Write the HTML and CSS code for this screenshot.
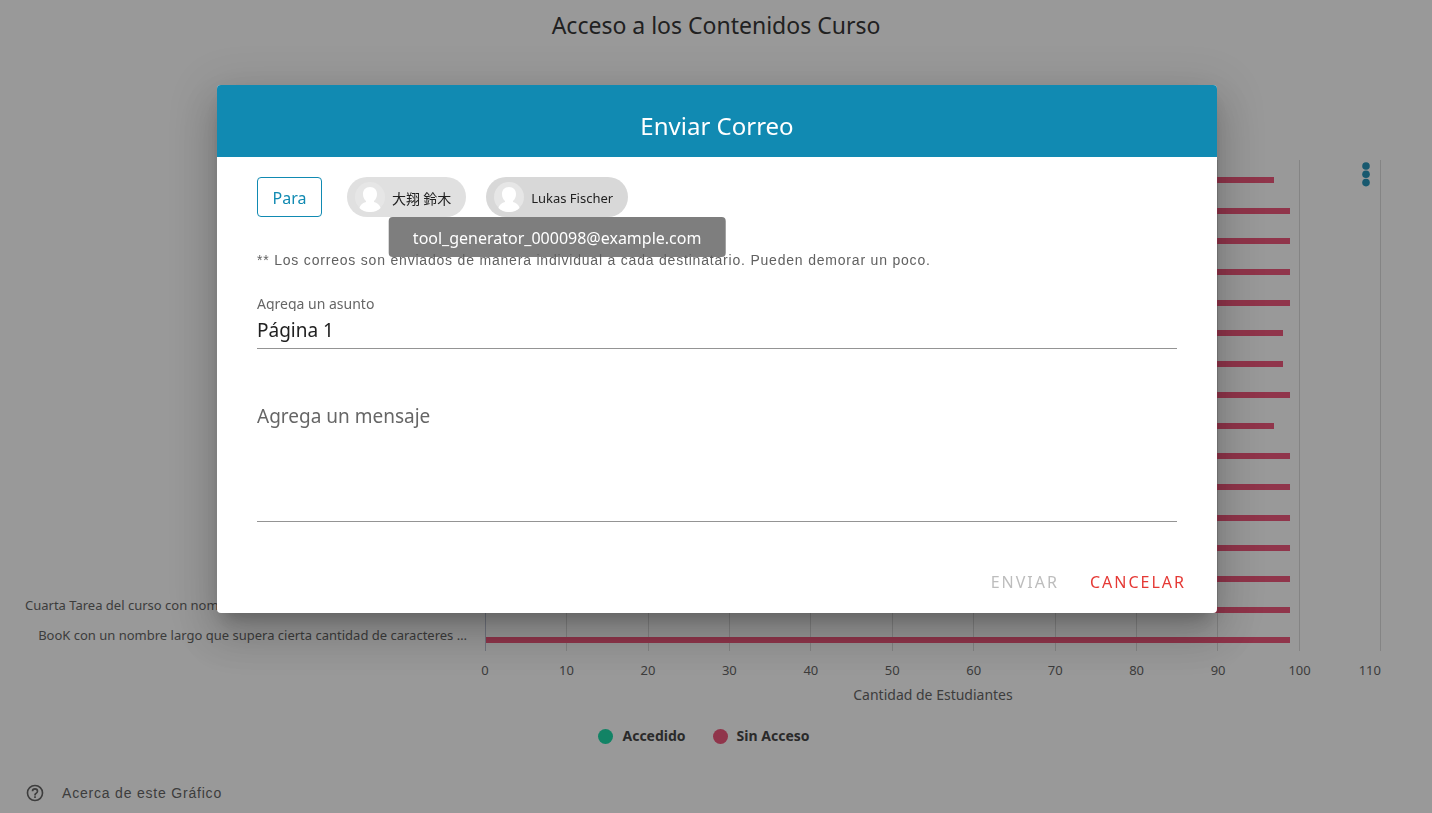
FILE: index.html
```html
<!DOCTYPE html>
<html lang="es">
<head>
<meta charset="utf-8">
<title>Acceso a los Contenidos Curso</title>
<meta name="viewport" content="width=device-width, initial-scale=1">
<link rel="stylesheet" href="styles.css">
</head>
<body>
<main class="page">
  <h1 class="page-title">Acceso a los Contenidos Curso</h1>
  <section class="chart">
    <div class="labels">
      <span></span><span></span><span></span><span></span><span></span><span></span><span></span>
      <span></span><span></span><span></span><span></span><span></span><span></span><span></span>
      <span>Cuarta Tarea del curso con nombre largo que supera cierta cantidad de caracteres</span>
      <span>BooK con un nombre largo que supera cierta cantidad de caracteres …</span>
    </div>
    <div class="plot">
      <div class="grid-lines"><i></i><i></i><i></i><i></i><i></i><i></i><i></i><i></i><i></i><i></i><i></i></div>
      <div class="bars">
        <div class="row"><b style="width:88%"></b></div>
        <div class="row"><b style="width:89.8%"></b></div>
        <div class="row"><b style="width:89.8%"></b></div>
        <div class="row"><b style="width:89.8%"></b></div>
        <div class="row"><b style="width:89.8%"></b></div>
        <div class="row"><b style="width:89%"></b></div>
        <div class="row"><b style="width:89%"></b></div>
        <div class="row"><b style="width:89.8%"></b></div>
        <div class="row"><b style="width:88%"></b></div>
        <div class="row"><b style="width:89.8%"></b></div>
        <div class="row"><b style="width:89.8%"></b></div>
        <div class="row"><b style="width:89.8%"></b></div>
        <div class="row"><b style="width:89.8%"></b></div>
        <div class="row"><b style="width:89.8%"></b></div>
        <div class="row"><b style="width:89.8%"></b></div>
        <div class="row"><b style="width:89.8%"></b></div>
      </div>
      <button class="menu" type="button" aria-label="Menú del gráfico">
        <svg width="8" height="25" viewBox="0 0 8 25"><circle cx="4" cy="4" r="3.800"/><circle cx="4" cy="12.3" r="3.800"/><circle cx="4" cy="20.6" r="3.800"/></svg>
      </button>
    </div>
    <div class="axis"><span>0</span><span>10</span><span>20</span><span>30</span><span>40</span><span>50</span><span>60</span><span>70</span><span>80</span><span>90</span><span>100</span><span>110</span></div>
    <div class="axis-title">Cantidad de Estudiantes</div>
  </section>
  <div class="legend">
    <span class="key key-on">Accedido</span>
    <span class="key key-off">Sin Acceso</span>
  </div>
  <footer class="about">
    <svg width="20" height="20" viewBox="0 0 24 24"><path d="M11,18H13V16H11V18M12,2A10,10 0 0,0 2,12A10,10 0 0,0 12,22A10,10 0 0,0 22,12A10,10 0 0,0 12,2M12,20C7.59,20 4,16.41 4,12C4,7.59 7.59,4 12,4C16.41,4 20,7.59 20,12C20,16.41 16.41,20 12,20M12,6A4,4 0 0,0 8,10H10A2,2 0 0,1 12,8A2,2 0 0,1 14,10C14,12 11,11.75 11,15H13C13,12.75 16,12.5 16,10A4,4 0 0,0 12,6Z"/></svg>
    <span>Acerca de este Gráfico</span>
  </footer>
</main>

<div class="overlay">
  <form class="dialog" role="dialog" aria-labelledby="dialog-title">
    <h2 class="dialog-title" id="dialog-title">Enviar Correo</h2>
    <div class="dialog-body">
      <div class="recipients">
        <button class="to" type="button">Para</button>
        <div class="chip">
          <svg class="avatar" viewBox="0 0 30 30"><circle class="disc" cx="15" cy="15" r="15"/><path d="M15 5c4.500 0 7 3 7 7 0 3-1.200 5.500-3 6.900v1.100c3 .8 5.600 2.400 6.600 6A15 15 0 0 1 15 30 15 15 0 0 1 4.400 26c1-3.600 3.600-5.200 6.600-6v-1.100C9.200 17.500 8 15 8 12c0-4 2.500-7 7-7z"/></svg>
          <span lang="ja">大翔 鈴木</span>
        </div>
        <div class="chip chip-active">
          <svg class="avatar" viewBox="0 0 30 30"><circle class="disc" cx="15" cy="15" r="15"/><path d="M15 5c4.500 0 7 3 7 7 0 3-1.200 5.500-3 6.900v1.100c3 .8 5.600 2.400 6.600 6A15 15 0 0 1 15 30 15 15 0 0 1 4.400 26c1-3.600 3.600-5.200 6.600-6v-1.100C9.200 17.500 8 15 8 12c0-4 2.500-7 7-7z"/></svg>
          <span>Lukas Fischer</span>
          <div class="tooltip" role="tooltip">tool_generator_000098@example.com</div>
        </div>
      </div>
      <p class="note">** Los correos son enviados de manera individual a cada destinatario. Pueden demorar un poco.</p>
      <div class="field">
        <label for="subject">Agrega un asunto</label>
        <input id="subject" type="text" value="Página 1">
      </div>
      <textarea class="message" aria-label="Agrega un mensaje" placeholder="Agrega un mensaje"></textarea>
    </div>
    <div class="actions">
      <button class="send" type="button" disabled>ENVIAR</button>
      <button class="cancel" type="button">CANCELAR</button>
    </div>
  </form>
</div>
</body>
</html>
```
FILE: styles.css
```css
* { box-sizing: border-box; }
body {
  margin: 0;
  background: #fff;
  color: #555;
  font-family: "Noto Sans", "Open Sans", "Noto Sans CJK JP", sans-serif;
}
button, input, textarea { font: inherit; margin: 0; }
button { background: none; border: 0; padding: 0; }

.page { min-height: 100vh; overflow: hidden; }
.page-title {
  margin: 0;
  padding-top: 9px;
  font-size: 23px;
  line-height: 32px;
  font-weight: 400;
  text-align: center;
  color: #222;
}
.chart {
  display: grid;
  grid-template-columns: 485px 1fr;
  grid-template-rows: 491px auto auto;
  margin-top: 119px;
  padding-right: 51px;
}
.labels {
  display: grid;
  grid-template-rows: repeat(16, 1fr);
  padding: 0 18px 0 25px;
  font-size: 13px;
  line-height: 30px;
  text-align: right;
}
.labels span { overflow: hidden; text-overflow: ellipsis; white-space: nowrap; }
.plot { display: grid; grid-template-columns: 1fr; grid-template-rows: 1fr; }
.plot > * { grid-area: 1 / 1; }
.grid-lines {
  display: grid;
  grid-template-columns: repeat(11, 1fr);
  border-left: 1px solid #b8bed0;
}
.grid-lines i { border-right: 1px solid #d8d8d8; }
.bars { display: grid; grid-template-rows: repeat(16, 1fr); }
.row { padding: 17px 0 0 1px; }
.row b { display: block; height: 6px; background: #ef476f; }
.menu { justify-self: end; align-self: start; padding: 2px 11px 0 0; }
.menu svg { display: block; fill: #118ab2; }
.axis {
  grid-column: 2;
  display: flex;
  justify-content: space-between;
  padding-top: 8px;
  font-size: 13px;
  line-height: 22px;
}
.axis span { width: 0; display: flex; justify-content: center; }
.axis span:last-child { justify-content: flex-end; }
.axis-title {
  grid-column: 2;
  font-size: 14px;
  line-height: 28px;
  text-align: center;
}
.legend {
  display: flex;
  justify-content: center;
  gap: 27px;
  padding: 16px 24px 0 0;
  font-size: 14px;
  line-height: 22px;
  font-weight: 700;
  color: #333;
}
.key { display: flex; align-items: center; gap: 9px; }
.key::before { content: ""; width: 15px; height: 15px; border-radius: 50%; background: #ef476f; }
.key-on::before { background: #06d6a0; }
.about {
  display: flex;
  align-items: center;
  gap: 17px;
  padding: 34px 25px 0;
  font-family: "Liberation Sans", Arial, sans-serif;
  font-size: 14px;
  line-height: 24px;
  letter-spacing: 0.8px;
}
.about svg { fill: #555; }

.overlay {
  position: fixed;
  inset: 0;
  display: flex;
  justify-content: center;
  align-items: flex-start;
  padding: 85px 16px 0 18px;
  background: rgba(33, 33, 33, 0.46);
}
.dialog {
  flex: 0 1 1000px;
  background: #fff;
  border-radius: 4px;
  box-shadow: 0 11px 15px -7px rgba(0, 0, 0, 0.2), 0 24px 38px 3px rgba(0, 0, 0, 0.14), 0 9px 46px 8px rgba(0, 0, 0, 0.12);
}
.dialog-title {
  margin: 0;
  padding: 25px 0 15px;
  border-radius: 4px 4px 0 0;
  background: #118ab2;
  color: #fff;
  font-size: 24px;
  line-height: 32px;
  font-weight: 400;
  text-align: center;
}
.dialog-body { padding: 20px 40px 0; }
.recipients { display: flex; gap: 20px; }
.to {
  width: 65px;
  height: 40px;
  margin-right: 5px;
  padding-top: 2px;
  border: 1px solid #118ab2;
  border-radius: 4px;
  color: #118ab2;
  font-size: 16px;
}
.chip {
  position: relative;
  display: flex;
  align-items: center;
  gap: 7px;
  height: 40px;
  padding: 0 15px 0 8px;
  border-radius: 20px;
  background: #e0e0e0;
  color: #212121;
  font-size: 13px;
}
.chip > span { padding-top: 2px; }
.chip > span:lang(ja) { font-family: "Noto Sans CJK JP", sans-serif; font-size: 14px; }
.chip-active { background: #d8d8d8; }
.avatar { width: 30px; height: 30px; fill: #fff; }
.disc { fill: #e6e6e6; }
.tooltip {
  position: absolute;
  top: 100%;
  left: 50%;
  transform: translateX(-50%);
  padding: 9px 24px 7px;
  border-radius: 4px;
  background: rgba(97, 97, 97, 0.82);
  color: #fff;
  font-size: 16px;
  line-height: 24px;
  white-space: nowrap;
}
.note {
  margin: 32px 0 0;
  font-family: "Liberation Sans", Arial, sans-serif;
  font-size: 14px;
  line-height: 22px;
  letter-spacing: 0.8px;
  color: #616161;
}
.field { margin-top: 24px; border-bottom: 1px solid #949494; }
.field label {
  display: block;
  height: 16px;
  overflow: hidden;
  font-size: 14px;
  line-height: 17px;
  color: #666;
}
.field input {
  display: block;
  width: 100%;
  height: 37px;
  padding: 0;
  border: 0;
  outline: 0;
  background: none;
  color: #212121;
  font-size: 19px;
}
.message {
  display: block;
  width: 100%;
  height: 122px;
  margin-top: 51px;
  padding: 0;
  border: 0;
  border-bottom: 1px solid #949494;
  outline: 0;
  resize: none;
  background: none;
  font-size: 19px;
  line-height: 32px;
}
.message::placeholder { color: #666; opacity: 1; }
.actions {
  display: flex;
  justify-content: flex-end;
  gap: 31px;
  padding: 42px 31px 13px;
  font-size: 16px;
  line-height: 36px;
}
.actions button { letter-spacing: 2px; }
.send { color: #bdbdbd; }
.cancel { color: #e53935; }
```
